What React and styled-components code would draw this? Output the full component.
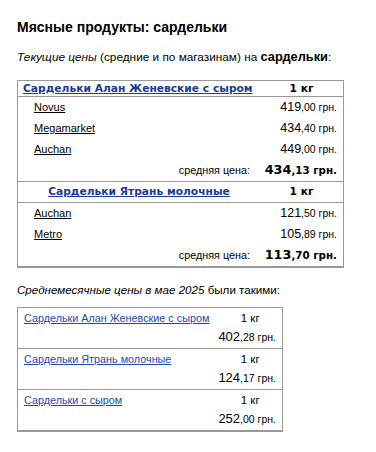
import React from "react";
import styled, { createGlobalStyle } from "styled-components";

const Global = createGlobalStyle`
  html, body { margin: 0; padding: 0; background: #fff; }
  body { font-family: "Liberation Sans", Arial, sans-serif; color: #000; }
`;

const Page = styled.div`
  padding: 18px 17px 12px 17px;
`;

const Title = styled.h1`
  margin: 0;
  font: bold 14px/18px "Liberation Sans", Arial, sans-serif;
`;

const Lead = styled.p`
  margin: 13px 0 15px;
  font: 11.8px/16px "Liberation Sans", Arial, sans-serif;
  white-space: nowrap;
  i { font-style: italic; }
  b { font-weight: bold; font-size: 12.8px; }
`;

const Table = styled.table`
  border-collapse: collapse;
  width: ${(p) => p.$w}px;
  border: 1px solid #999;
  border-bottom-width: 2px;
`;

const HeadRow = styled.tr`
  border-top: 1px solid #999;
  border-bottom: 1px solid #999;
`;

const HeadCell = styled.td`
  padding: 0 5px;
  height: ${(p) => p.$h}px;
  text-align: ${(p) => p.$align || "left"};
  white-space: nowrap;
  font: bold 10.7px/14px "DejaVu Sans", Verdana, sans-serif;
  width: ${(p) => (p.$w ? `${p.$w}px` : "auto")};
`;

const HeadLink = styled.a`
  color: #1a3c95;
  text-decoration: underline;
`;

const Row = styled.tr``;

const StoreCell = styled.td`
  height: 20px;
  padding: 0 6px 1px 16px;
  font: 11px/16px "Liberation Sans", Arial, sans-serif;
  vertical-align: middle;
`;

const StoreLink = styled.a`
  color: #000;
  text-decoration: underline;
`;

const PriceCell = styled.td`
  height: 20px;
  padding: 0 6px 1px 0;
  text-align: right;
  white-space: nowrap;
  font: 12.5px/16px "Liberation Sans", Arial, sans-serif;
`;

const Small = styled.span`
  font-size: 10.5px;
`;

const AvgLabel = styled.td`
  height: 20px;
  text-align: right;
  padding: 0 10px 1px 0;
  font: 10.8px/16px "Liberation Sans", Arial, sans-serif;
`;

const AvgPrice = styled.td`
  height: 20px;
  text-align: right;
  padding: 0 6px 1px 0;
  white-space: nowrap;
  font: bold 12.8px/16px "DejaVu Sans", Verdana, sans-serif;
  span { font-size: 10.3px; }
`;

const Section = styled.p`
  margin: 14px 0 9px;
  font: 11.6px/16px "Liberation Sans", Arial, sans-serif;
  white-space: nowrap;
`;

const MonthRow = styled.tr`
  border-top: 1px solid #999;
`;

const MCellName = styled.td`
  padding: 2px 6px 0 6px;
  height: 18px;
  vertical-align: top;
  white-space: nowrap;
  font: 10.8px/16px "Liberation Sans", Arial, sans-serif;
`;

const MLink = styled.a`
  color: #1c4aae;
  text-decoration: underline;
`;

const MUnit = styled.td`
  width: 62px;
  padding: 2px 0 0 0;
  vertical-align: top;
  text-align: center;
  font: 11.5px/16px "Liberation Sans", Arial, sans-serif;
`;

const MPrice = styled.td`
  padding: 0 6px 2px 0;
  height: 18px;
  text-align: right;
  white-space: nowrap;
  font: 13px/16px "Liberation Sans", Arial, sans-serif;
`;

const stores = [
  {
    name: "Сардельки Алан Женевские с сыром",
    align: "left",
    rows: [
      ["Novus", "419", ",00 грн."],
      ["Megamarket", "434", ",40 грн."],
      ["Auchan", "449", ",00 грн."],
    ],
    avg: ["434", ",13 грн."],
    h: 15,
  },
  {
    name: "Сардельки Ятрань молочные",
    align: "center",
    rows: [
      ["Auchan", "121", ",50 грн."],
      ["Metro", "105", ",89 грн."],
    ],
    avg: ["113", ",70 грн."],
    h: 20,
  },
];

const monthly = [
  ["Сардельки Алан Женевские с сыром", "402", ",28 грн."],
  ["Сардельки Ятрань молочные", "124", ",17 грн."],
  ["Сардельки с сыром", "252", ",00 грн."],
];

export default function App() {
  return (
    <>
      <Global />
      <Page>
        <Title>Мясные продукты: сардельки</Title>
        <Lead>
          <i>Текущие цены</i> (средние и по магазинам) на <b>сардельки</b>:
        </Lead>
        <Table $w={327}>
          <tbody>
            {stores.map((g) => (
              <React.Fragment key={g.name}>
                <HeadRow>
                  <HeadCell $h={g.h} $align={g.align}>
                    <HeadLink href="#">{g.name}</HeadLink>
                  </HeadCell>
                  <HeadCell $h={g.h} $align="center" $w={73}>
                    1 кг
                  </HeadCell>
                </HeadRow>
                {g.rows.map((r) => (
                  <Row key={r[0]}>
                    <StoreCell>
                      <StoreLink href="#">{r[0]}</StoreLink>
                    </StoreCell>
                    <PriceCell>
                      {r[1]}
                      <Small>{r[2]}</Small>
                    </PriceCell>
                  </Row>
                ))}
                <Row>
                  <AvgLabel>средняя цена:</AvgLabel>
                  <AvgPrice>
                    {g.avg[0]}
                    <span>{g.avg[1]}</span>
                  </AvgPrice>
                </Row>
              </React.Fragment>
            ))}
          </tbody>
        </Table>
        <Section>
          <i>Среднемесячные цены в мае 2025</i> были такими:
        </Section>
        <Table $w={266}>
          <tbody>
            {monthly.map((m) => (
              <React.Fragment key={m[0]}>
                <MonthRow>
                  <MCellName>
                    <MLink href="#">{m[0]}</MLink>
                  </MCellName>
                  <MUnit>1 кг</MUnit>
                </MonthRow>
                <Row>
                  <MCellName />
                  <MPrice>
                    {m[1]}
                    <Small>{m[2]}</Small>
                  </MPrice>
                </Row>
              </React.Fragment>
            ))}
          </tbody>
        </Table>
      </Page>
    </>
  );
}
